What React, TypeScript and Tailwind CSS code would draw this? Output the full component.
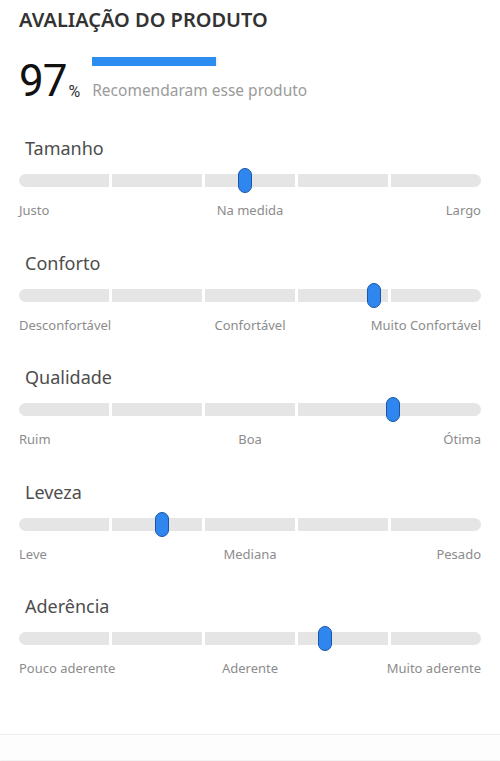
import React from "react";

type Rating = {
  title: string;
  labels: [string, string, string];
  value: number; // 0..1 along the track
};

const RATINGS: Rating[] = [
  { title: "Tamanho", labels: ["Justo", "Na medida", "Largo"], value: 0.489 },
  { title: "Conforto", labels: ["Desconfortável", "Confortável", "Muito Confortável"], value: 0.768 },
  { title: "Qualidade", labels: ["Ruim", "Boa", "Ótima"], value: 0.81 },
  { title: "Leveza", labels: ["Leve", "Mediana", "Pesado"], value: 0.31 },
  { title: "Aderência", labels: ["Pouco aderente", "Aderente", "Muito aderente"], value: 0.662 },
];

function RatingSlider({ rating }: { rating: Rating }) {
  return (
    <div className="h-[114.5px] px-[19px]">
      <div className="pl-[6px] text-[18px] leading-[24px] text-[#4d4d4d]">{rating.title}</div>

      {/* track */}
      <div className="relative mt-[14px] h-[13px]">
        <div className="flex h-full gap-[3px]">
          <div className="flex-1 rounded-l-full bg-[#e5e5e5]" />
          <div className="flex-1 bg-[#e5e5e5]" />
          <div className="flex-1 bg-[#e5e5e5]" />
          <div className="flex-1 bg-[#e5e5e5]" />
          <div className="flex-1 rounded-r-full bg-[#e5e5e5]" />
        </div>
        <div
          className="absolute top-[-6px] h-[25px] w-[14px] -translate-x-1/2 rounded-full border-[1.5px] border-[#1a56a6] bg-[#2f86ee]"
          style={{ left: `${rating.value * 100}%` }}
        />
      </div>

      <div className="mt-[15px] flex justify-between text-[13px] leading-[16px] text-[#8c8c8c]">
        <span className="w-[150px]">{rating.labels[0]}</span>
        <span className="w-[150px] text-center">{rating.labels[1]}</span>
        <span className="w-[150px] text-right">{rating.labels[2]}</span>
      </div>
    </div>
  );
}

export default function App() {
  return (
    <div
      className="relative h-[761px] w-[500px] overflow-hidden bg-white"
      style={{ fontFamily: '"Noto Sans", "Open Sans", sans-serif' }}
    >
      <div className="px-[19px] pt-[6px] text-[20px] font-semibold leading-[27px] text-[#333]">
        AVALIAÇÃO DO PRODUTO
      </div>

      {/* recommendation */}
      <div className="mt-[23px] flex px-[19px]">
        <div className="flex items-end">
          <span
            className="text-[44px] leading-[40px] tracking-[-1px] text-[#111]"
            style={{ fontFamily: "Roboto, Arial, sans-serif" }}
          >
            97
          </span>
          <span
            className="mb-[1px] ml-[2px] text-[16px] leading-[16px] text-[#333]"
            style={{ fontFamily: "Roboto, Arial, sans-serif" }}
          >
            %
          </span>
        </div>
        <div className="ml-[12px] flex flex-col">
          <div className="mt-[1px] h-[9px] w-[126px] bg-[#f0f4f8]">
            <div className="h-full w-[124px] bg-[#2d8cf0]" />
          </div>
          <div className="mt-[13px] text-[15.5px] leading-[22px] text-[#9b9b9b]">
            Recomendaram esse produto
          </div>
        </div>
      </div>

      <div className="mt-[35px] flex flex-col">
        {RATINGS.map((r) => (
          <RatingSlider key={r.title} rating={r} />
        ))}
      </div>

      {/* next card edge */}
      <div className="absolute left-0 right-0 top-[734px] h-[26px] border-t border-[#eeeeee] bg-[#fdfdfd] shadow-[0_1px_2px_rgba(0,0,0,0.08)]" />
    </div>
  );
}
